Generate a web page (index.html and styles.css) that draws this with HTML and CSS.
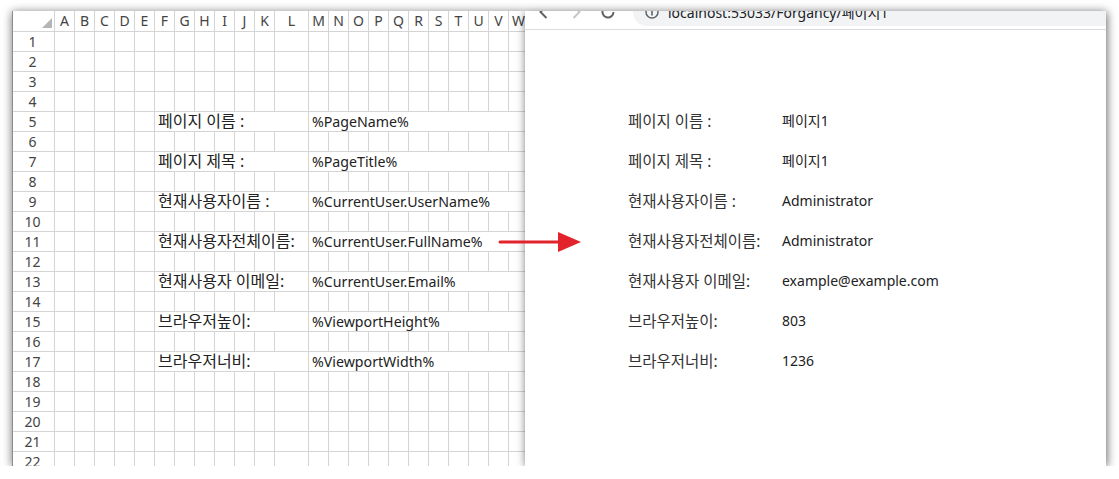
FILE: index.html
```html
<!DOCTYPE html>
<html lang="ko">
<head>
    <meta charset="UTF-8">
    <title>Forguncy page variables</title>
    <link rel="stylesheet" href="styles.css">
</head>
<body>
    <div class="desk">
        <div class="sheet-window">
            <div id="sheet" class="sheet"></div>
        </div>
        <div class="browser-window">
            <div class="toolbar">
                <span class="nav-btn">
                    <svg width="16" height="16" viewBox="0 0 16 16"><path d="M10.5 2 L4.5 8 L10.5 14" fill="none" stroke="#5f6368" stroke-width="2"/></svg>
                </span>
                <span class="nav-btn">
                    <svg width="16" height="16" viewBox="0 0 16 16"><path d="M5.5 2 L11.5 8 L5.5 14" fill="none" stroke="#c4c7ca" stroke-width="2"/></svg>
                </span>
                <span class="nav-btn">
                    <svg width="16" height="16" viewBox="0 0 16 16"><path d="M13.5 8 A5.5 5.5 0 1 1 11.9 4.1" fill="none" stroke="#5f6368" stroke-width="2"/><path d="M10 1.5 L14 1.5 L14 5.5 Z" fill="#5f6368"/></svg>
                </span>
                <div class="omnibox">
                    <svg width="14" height="14" viewBox="0 0 14 14"><circle cx="7" cy="7" r="6" fill="none" stroke="#5f6368" stroke-width="1.5"/><rect x="6.2" y="6" width="1.6" height="4.5" fill="#5f6368"/><rect x="6.2" y="3.4" width="1.6" height="1.6" fill="#5f6368"/></svg>
                    <span class="url">localhost:53033/Forgancy/페이지1</span>
                </div>
            </div>
            <div class="page">
                <table class="info-table">
                    <tr><td class="info-label">페이지 이름 :</td><td>페이지1</td></tr>
                    <tr><td class="info-label">페이지 제목 :</td><td>페이지1</td></tr>
                    <tr><td class="info-label">현재사용자이름 :</td><td>Administrator</td></tr>
                    <tr><td class="info-label">현재사용자전체이름:</td><td>Administrator</td></tr>
                    <tr><td class="info-label">현재사용자 이메일:</td><td>example@example.com</td></tr>
                    <tr><td class="info-label">브라우저높이:</td><td>803</td></tr>
                    <tr><td class="info-label">브라우저너비:</td><td>1236</td></tr>
                </table>
            </div>
        </div>
        <svg class="arrow" width="86" height="24" viewBox="0 0 86 24">
            <line x1="2" y1="12" x2="62" y2="12" stroke="#e3232b" stroke-width="3" stroke-linecap="round"/>
            <polygon points="60,2 83,12 60,22" fill="#e3232b"/>
        </svg>
    </div>
    <script>
        const columns = 'ABCDEFGHIJKLMNOPQRSTUVW'.split('');
        const entries = {
            5: ['페이지 이름 :', '%PageName%'],
            7: ['페이지 제목 :', '%PageTitle%'],
            9: ['현재사용자이름 :', '%CurrentUser.UserName%'],
            11: ['현재사용자전체이름:', '%CurrentUser.FullName%'],
            13: ['현재사용자 이메일:', '%CurrentUser.Email%'],
            15: ['브라우저높이:', '%ViewportHeight%'],
            17: ['브라우저너비:', '%ViewportWidth%']
        };
        const sheet = document.getElementById('sheet');

        function cell(className, text) {
            const div = document.createElement('div');
            div.className = className;
            if (text) div.textContent = text;
            return div;
        }

        // Column header row
        const head = cell('sheet-row head');
        head.appendChild(cell('row-head corner'));
        columns.forEach(c => {
            head.appendChild(cell(c === 'L' ? 'cell col-head wide' : 'cell col-head', c));
        });
        sheet.appendChild(head);

        // Rows 1..22
        for (let r = 1; r <= 22; r++) {
            const row = cell('sheet-row');
            row.appendChild(cell('row-head', String(r)));
            if (entries[r]) {
                columns.slice(0, 5).forEach(() => row.appendChild(cell('cell')));
                row.appendChild(cell('cell label-cell', entries[r][0]));
                row.appendChild(cell('cell value-cell', entries[r][1]));
            } else {
                columns.forEach(c => row.appendChild(cell(c === 'L' ? 'cell wide' : 'cell')));
            }
            sheet.appendChild(row);
        }
    </script>
</body>
</html>
```

FILE: styles.css
```css
body {
    margin: 0;
    background: #ffffff;
    font-family: 'Noto Sans', 'Noto Sans CJK KR', sans-serif;
    overflow: hidden;
}
.desk {
    position: relative;
    display: flex;
    padding: 11px 0 0 12px;
}

/* Excel window */
.sheet-window {
    width: 512px;
    height: 455px;
    border-left: 1px solid #8c8c8c;
    overflow: hidden;
    background: #ffffff;
    box-shadow: 0 1px 9px rgba(0, 0, 0, 0.55);
}
.sheet {
    width: 560px;
}
.sheet-row {
    display: flex;
    height: 20px;
}
.sheet-row.head {
    height: 21px;
}
.row-head {
    box-sizing: border-box;
    flex: 0 0 42px;
    border-right: 1px solid #d4d4d4;
    border-bottom: 1px solid #d4d4d4;
    color: #444444;
    font-size: 14px;
    line-height: 19px;
    text-align: center;
    padding-right: 2px;
}
.row-head.corner {
    position: relative;
}
.row-head.corner::after {
    content: '';
    position: absolute;
    right: 2px;
    bottom: 3px;
    border-style: solid;
    border-width: 0 0 10px 10px;
    border-color: transparent transparent #b5b5b5 transparent;
}
.cell {
    box-sizing: border-box;
    flex: 0 0 20px;
    border-right: 1px solid #d4d4d4;
    border-bottom: 1px solid #d4d4d4;
    font-size: 14.2px;
    line-height: 19px;
    color: #222222;
    white-space: nowrap;
}
.cell.wide {
    flex-basis: 34px;
}
.col-head {
    color: #444444;
    font-size: 14px;
    line-height: 20px;
    text-align: center;
}
.label-cell {
    flex-basis: 154px;
    padding-left: 3px;
    font-size: 16px;
}
.value-cell {
    flex: 1 0 220px;
    padding-left: 3px;
    border-right: none;
}

/* Browser window */
.browser-window {
    position: relative;
    width: 581px;
    height: 455px;
    overflow: hidden;
    background: #ffffff;
    box-shadow: 1px 1px 9px rgba(0, 0, 0, 0.6);
}
.toolbar {
    box-sizing: border-box;
    height: 36px;
    margin-top: -17px;
    display: flex;
    align-items: center;
    padding-left: 3px;
    border-bottom: 1px solid #dadce0;
    background: #ffffff;
}
.nav-btn {
    width: 32px;
    display: flex;
    justify-content: center;
}
.omnibox {
    flex: 1;
    height: 28px;
    margin-left: 9px;
    margin-right: -20px;
    border-radius: 14px;
    background: #f1f3f4;
    display: flex;
    align-items: center;
    padding-left: 12px;
    gap: 9px;
}
.url {
    color: #202124;
    font-size: 14px;
}
.page {
    padding: 70px 0 0 103px;
}
.info-table {
    border-collapse: collapse;
    font-size: 14px;
    color: #222222;
}
.info-table td {
    height: 40px;
    padding: 0;
    white-space: nowrap;
}
.info-label {
    width: 154px;
    color: #333333;
    font-size: 15.5px;
}

.arrow {
    position: absolute;
    left: 498px;
    top: 230px;
}
```
